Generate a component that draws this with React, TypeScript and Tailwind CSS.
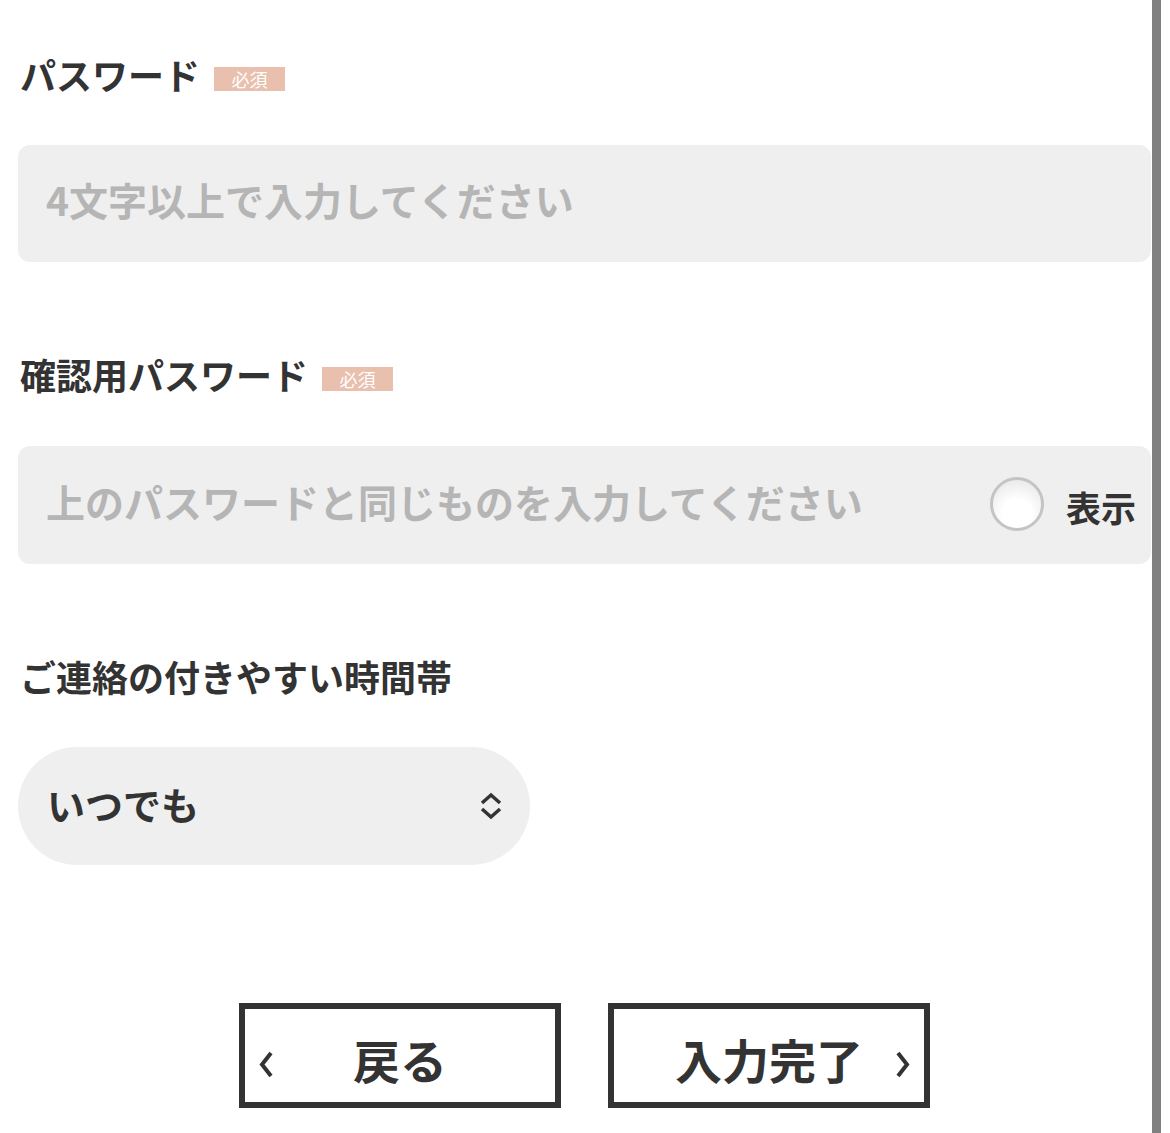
import React from "react";

const Badge = () => (
  <span className="ml-[14px] mt-[8px] flex h-[24px] w-[71px] items-center justify-center bg-[#e9bfae] text-[18px] leading-none text-white">
    必須
  </span>
);

const Label = ({ text, required }: { text: string; required?: boolean }) => (
  <div className="flex h-[50px] items-center pl-[2px]">
    <span className="mb-[3px] text-[36px] font-bold leading-[50px] text-[#333]">{text}</span>
    {required && <Badge />}
  </div>
);

const App = () => {
  return (
    <div className="flex h-[1133px] w-[1170px] bg-white font-['Noto_Sans_CJK_JP',sans-serif]">
      <div className="flex w-[1152px] flex-col pl-[18px] pr-[1px] pt-[50px]">
        <Label text="パスワード" required />
        <div className="mt-[45px] flex h-[117px] items-center rounded-[12px] bg-[#efefef] px-[28px] pb-[8px]">
          <input
            type="password"
            placeholder="4文字以上で入力してください"
            className="w-full bg-transparent text-[39px] font-bold text-[#333] outline-none placeholder:text-[#b5b5b5]"
          />
        </div>

        <div className="mt-[88px]">
          <Label text="確認用パスワード" required />
        </div>
        <div className="mt-[46px] flex h-[118px] items-center rounded-[12px] bg-[#efefef] pl-[28px] pr-[15px]">
          <input
            type="password"
            placeholder="上のパスワードと同じものを入力してください"
            className="mb-[8px] min-w-0 flex-1 bg-transparent text-[39px] font-bold text-[#333] outline-none placeholder:text-[#b5b5b5]"
          />
          <span className="mb-[3px] h-[54px] w-[54px] rounded-full border-[3px] border-[#c4c4c4] bg-[radial-gradient(circle_at_50%_70%,#ffffff_0%,#ffffff_35%,#e2e2e2_100%)]" />
          <span className="ml-[22px] mt-[2px] text-[35px] font-bold leading-none text-[#333]">表示</span>
        </div>

        <div className="mt-[88px]">
          <Label text="ご連絡の付きやすい時間帯" />
        </div>
        <div className="mt-[45px] flex h-[118px] w-[512px] items-center justify-between rounded-full bg-[#efefef] pl-[29px] pr-[27px]">
          <span className="mb-[4px] text-[38px] font-bold leading-none text-[#333]">いつでも</span>
          <svg width="24" height="28" viewBox="0 0 24 28" fill="none" stroke="#333" strokeWidth="3.5">
            <polyline points="3,11 12,3 21,11" />
            <polyline points="3,17 12,25 21,17" />
          </svg>
        </div>

        <div className="mt-[138px] flex justify-center gap-[47px]">
          <button className="flex h-[105px] w-[322px] items-center border-[6px] border-[#333] bg-white px-[14px]">
            <svg className="mt-[18px]" width="14" height="27" viewBox="0 0 14 27" fill="none" stroke="#333" strokeWidth="4">
              <polyline points="12,2 3,13.5 12,25" />
            </svg>
            <span className="mt-[6px] flex-1 text-center text-[47px] font-bold leading-none text-[#333]">戻る</span>
            <span className="w-[14px]" />
          </button>
          <button className="flex h-[105px] w-[322px] items-center border-[6px] border-[#333] bg-white px-[14px]">
            <span className="w-[14px]" />
            <span className="mt-[6px] flex-1 text-center text-[47px] font-bold leading-none text-[#333]">入力完了</span>
            <svg className="mt-[18px]" width="14" height="27" viewBox="0 0 14 27" fill="none" stroke="#333" strokeWidth="4">
              <polyline points="2,2 11,13.5 2,25" />
            </svg>
          </button>
        </div>
      </div>
      <div className="h-full w-[9px] bg-[#808080]" />
      <div className="h-full w-[9px] bg-white" />
    </div>
  );
};

export default App;
